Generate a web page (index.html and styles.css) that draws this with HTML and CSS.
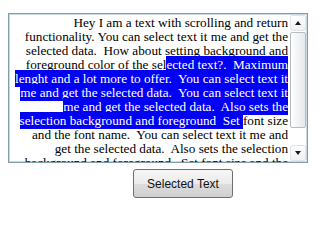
FILE: index.html
```html
<!DOCTYPE html>
<html>
<head>
<meta charset="utf-8">
<link rel="stylesheet" href="styles.css">
</head>
<body>
<div class="page">
  <div class="textbox">
    <div class="content">
      <div class="line">Hey I am a text with scrolling and return</div>
      <div class="line">functionality. You can select text it me and get the</div>
      <div class="line">selected data.  How about setting background and</div>
      <div class="line">foreground color of the sel<span class="sel">ected text?.  Maximum</span></div>
      <div class="line"><span class="sel">lenght and a lot more to offer.  You can select text it</span></div>
      <div class="line"><span class="sel">me and get the selected data.  You can select text it</span></div>
      <div class="line"><span class="sel">me and get the selected data.  Also sets the</span></div>
      <div class="line"><span class="sel">selection background and foreground  Set </span>font size</div>
      <div class="line">and the font name.  You can select text it me and</div>
      <div class="line">get the selected data.  Also sets the selection</div>
      <div class="line">background and foreground.  Set font size and the</div>
    </div>
    <div class="scrollbar">
      <div class="sb-btn"><span class="arrow-up"></span></div>
      <div class="sb-track"><div class="sb-thumb"></div></div>
      <div class="sb-btn"><span class="arrow-down"></span></div>
    </div>
  </div>
  <div class="actions">
    <button class="btn">Selected Text</button>
  </div>
</div>
</body>
</html>
```
FILE: styles.css
```css
html, body {
  margin: 0;
  padding: 0;
  background: #ffffff;
}
.page {
  padding: 13px 0 0 8px;
}
.textbox {
  width: 300px;
  height: 150px;
  box-sizing: border-box;
  border: 1px solid #7f9dab;
  box-shadow: inset 0 0 0 1px #c9dae1;
  display: flex;
  overflow: hidden;
  background: #fff;
}
.content {
  flex: 1;
  padding: 2px 2px 0 4px;
  overflow: hidden;
  font-family: "Liberation Serif", serif;
  font-size: 13.2px;
  line-height: 14px;
  color: #000;
  text-align: right;
}
.line {
  white-space: pre;
  height: 14px;
}
.sel {
  background: #0000f5;
  color: #fff;
  padding: 1px 0;
}
.scrollbar {
  width: 17px;
  display: flex;
  flex-direction: column;
  padding: 1px 1px 1px 0;
  box-sizing: border-box;
}
.sb-btn {
  height: 16px;
  box-sizing: border-box;
  border: 1px solid #e1e5e8;
  border-radius: 2px;
  background: linear-gradient(#ffffff, #eef0f2);
  display: flex;
  align-items: center;
  justify-content: center;
}
.arrow-up {
  width: 0;
  height: 0;
  border-left: 3.5px solid transparent;
  border-right: 3.5px solid transparent;
  border-bottom: 4px solid #1a1a1a;
}
.arrow-down {
  width: 0;
  height: 0;
  border-left: 3.5px solid transparent;
  border-right: 3.5px solid transparent;
  border-top: 4px solid #1a1a1a;
}
.sb-track {
  flex: 1;
  padding: 1px 0;
}
.sb-thumb {
  height: 96px;
  box-sizing: border-box;
  border: 1px solid #b4bcc4;
  border-radius: 2px;
  background: linear-gradient(90deg, #ffffff, #f1f3f5 50%, #e6e9ec);
}
.actions {
  padding: 6px 0 0 125px;
}
.btn {
  width: 100px;
  height: 29px;
  border: 1px solid #707070;
  border-radius: 3px;
  background: linear-gradient(#f6f6f6, #ebebeb 50%, #dddddd 51%, #cfcfcf);
  font-family: "Liberation Sans", Arial, sans-serif;
  font-size: 12px;
  color: #111;
  padding: 0;
  margin: 0;
}
```
